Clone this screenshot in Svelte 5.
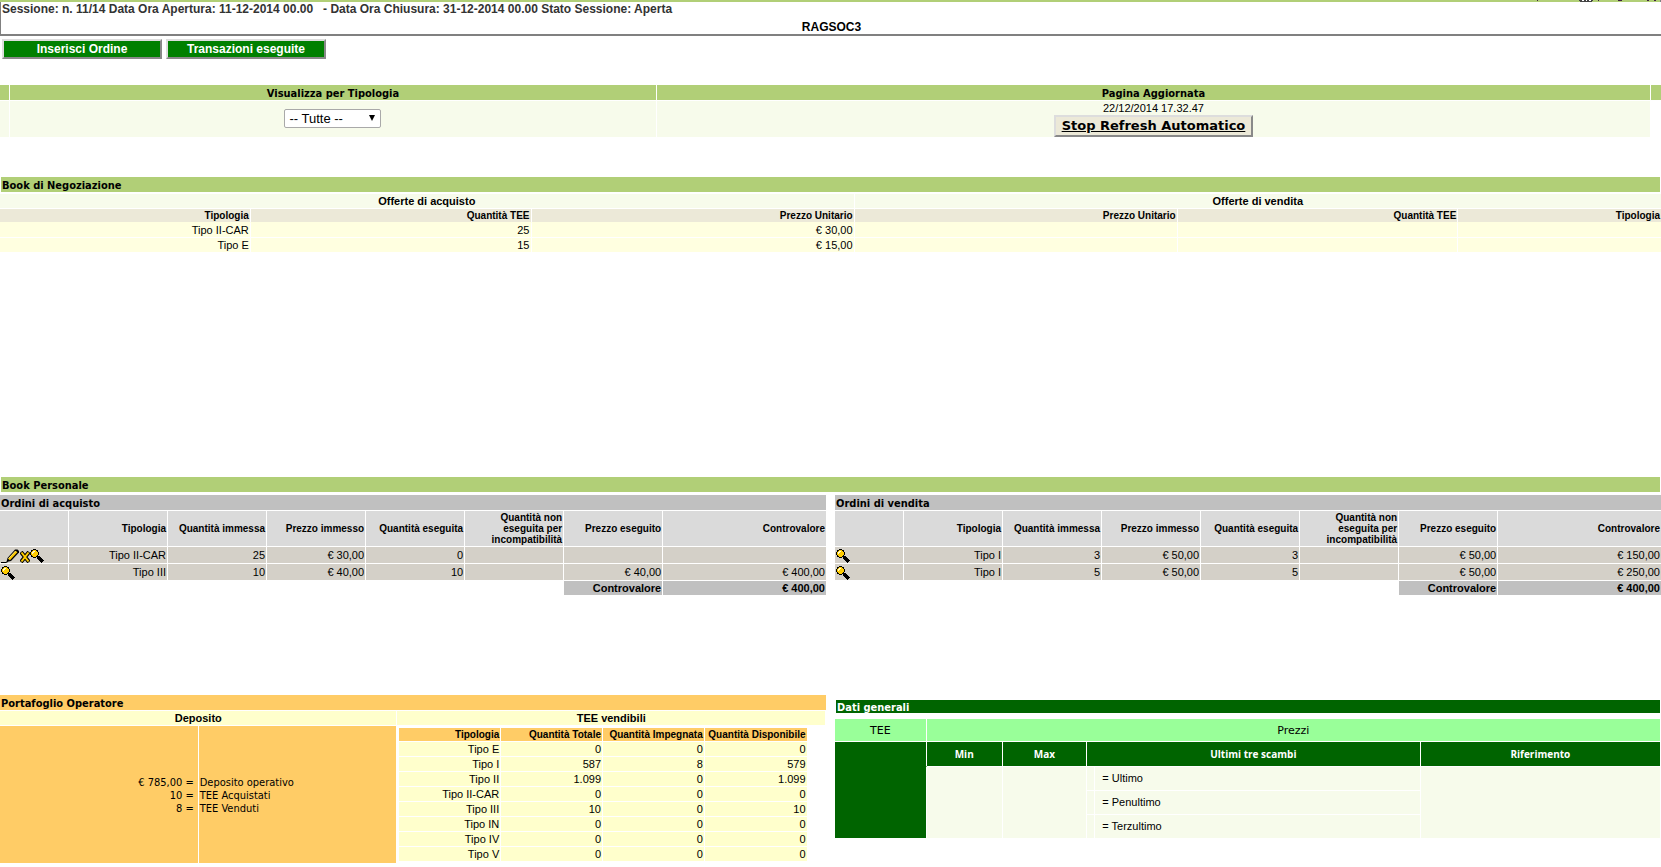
<script lang="ts">
  interface Order {
    editable: boolean;
    cells: string[];
  }

  interface OrderBook {
    id: string;
    title: string;
    orders: Order[];
    total: string;
  }

  let filter = $state('-- Tutte --');
  let autoRefresh = $state(true);

  const offers = [
    ['Tipo II-CAR', '25', '€ 30,00', '', '', ''],
    ['Tipo E', '15', '€ 15,00', '', '', ''],
  ];

  const orderColumns = [
    'Tipologia',
    'Quantità immessa',
    'Prezzo immesso',
    'Quantità eseguita',
    'Quantità non eseguita per incompatibilità',
    'Prezzo eseguito',
    'Controvalore',
  ];

  const books: OrderBook[] = [
    {
      id: 'acquisto',
      title: 'Ordini di acquisto',
      orders: [
        { editable: true, cells: ['Tipo II-CAR', '25', '€ 30,00', '0', '', '', ''] },
        { editable: false, cells: ['Tipo III', '10', '€ 40,00', '10', '', '€ 40,00', '€ 400,00'] },
      ],
      total: '€ 400,00',
    },
    {
      id: 'vendita',
      title: 'Ordini di vendita',
      orders: [
        { editable: false, cells: ['Tipo I', '3', '€ 50,00', '3', '', '€ 50,00', '€ 150,00'] },
        { editable: false, cells: ['Tipo I', '5', '€ 50,00', '5', '', '€ 50,00', '€ 250,00'] },
      ],
      total: '€ 400,00',
    },
  ];

  const holdings = [
    ['Tipo E', '0', '0', '0'],
    ['Tipo I', '587', '8', '579'],
    ['Tipo II', '1.099', '0', '1.099'],
    ['Tipo II-CAR', '0', '0', '0'],
    ['Tipo III', '10', '0', '10'],
    ['Tipo IN', '0', '0', '0'],
    ['Tipo IV', '0', '0', '0'],
    ['Tipo V', '0', '0', '0'],
  ];
</script>

{#snippet editIcon()}
  <svg width="19" height="14" viewBox="0 0 19 14" aria-hidden="true">
    <path d="M0 13.5h5l2-1" fill="none" stroke="#000" />
    <path d="M5.5 13l1-4L14 0.5h2.500l1.500 1.500v1.500L10 12z" fill="#000" />
    <path d="M8 10.500L15.500 2.500" fill="none" stroke="#fc0" stroke-width="2.400" />
    <path d="M7.500 9.500L14.500 2" fill="none" stroke="#fff09a" stroke-width="0.800" />
  </svg>
{/snippet}

{#snippet deleteIcon()}
  <svg width="10" height="12" viewBox="0 0 10 12" aria-hidden="true">
    <path d="M1 1l8 10M9 1L1 11" fill="none" stroke="#000" stroke-width="4" />
    <path d="M1.500 1.500l7 9M8.500 1.500l-7 9" fill="none" stroke="#fc0" stroke-width="2" />
  </svg>
{/snippet}

{#snippet viewIcon()}
  <svg width="14" height="14" viewBox="0 0 14 14" shape-rendering="crispEdges" aria-hidden="true">
    <path d="M3 0h3v1h2v2h1v3H8v2H6v1H3V8H1V6H0V3h1V1h2z" fill="#000" />
    <path d="M3 1h3v1h1v1h1v3H7v1H6v1H3V7H2V6H1V3h1V2h1z" fill="#fc0" />
    <path d="M3 2h2v1H4v1H3v1H2V3h1z" fill="#fffbd0" />
    <path d="M8 7h2v1h1v1h1v1h1v1h1v1h-1v1h-1v1h-1v-1h-1v-1H9v-1H8v-1H7V8h1z" fill="#000" />
  </svg>
{/snippet}

<header>
  <div class="strip">
    <svg width="125" height="2" viewBox="0 0 125 2" shape-rendering="crispEdges" aria-hidden="true">
      <path d="M43 0h14v1h-1v1H44V1h-1z" fill="#444" />
      <path d="M46 0h2v1h-2zM50 0h1v1h-1zM53 0h2v1h-2z" fill="#fff" />
      <path d="M1 0h1v1H1zM62 0h1v1h-1zM82 0h4v1h-4zM111 0h2v1h-2zM118 0h2v1h-2z" fill="#402040" />
      <path d="M124 0h1v2h-1z" fill="#808080" />
    </svg>
  </div>
  <div class="session">
    <p>Sessione: n. 11/14 Data Ora Apertura: 11-12-2014 00.00 &nbsp; - Data Ora Chiusura: 31-12-2014 00.00 Stato Sessione: Aperta</p>
    <p class="company">RAGSOC3</p>
  </div>
</header>

<nav class="actions">
  <button type="button">Inserisci Ordine</button>
  <button type="button">Transazioni eseguite</button>
</nav>

<table class="filters">
  <colgroup>
    <col class="edge" />
    <col class="filter-col" />
    <col />
    <col class="edge" />
  </colgroup>
  <thead>
    <tr>
      <th></th>
      <th><label for="tipologia">Visualizza per Tipologia</label></th>
      <th>Pagina Aggiornata</th>
      <th></th>
    </tr>
  </thead>
  <tbody>
    <tr>
      <td></td>
      <td>
        <span class="select">
          <select id="tipologia" bind:value={filter}>
            <option>-- Tutte --</option>
            {#each holdings as [type] (type)}
              <option>{type}</option>
            {/each}
          </select>
        </span>
      </td>
      <td>
        <div class="updated">22/12/2014 17.32.47</div>
        <button type="button" class="refresh" onclick={() => (autoRefresh = !autoRefresh)}>
          {autoRefresh ? 'Stop' : 'Start'} Refresh Automatico
        </button>
      </td>
      <td class="blank"></td>
    </tr>
  </tbody>
</table>

<section class="market">
  <h2>Book di Negoziazione</h2>
  <table class="offers">
    <colgroup>
      <col class="o1" /><col class="o2" /><col class="o3" />
      <col class="o3" /><col class="o2" /><col />
    </colgroup>
    <thead>
      <tr class="sides">
        <th colspan="3">Offerte di acquisto</th>
        <th colspan="3">Offerte di vendita</th>
      </tr>
      <tr class="names">
        <th>Tipologia</th>
        <th>Quantità TEE</th>
        <th>Prezzo Unitario</th>
        <th>Prezzo Unitario</th>
        <th>Quantità TEE</th>
        <th>Tipologia</th>
      </tr>
    </thead>
    <tbody>
      {#each offers as offer}
        <tr>
          {#each offer as value}
            <td>{value}</td>
          {/each}
        </tr>
      {/each}
    </tbody>
  </table>
</section>

<section class="personal">
  <h2>Book Personale</h2>
  <div class="halves">
    {#each books as book (book.id)}
      <div>
        <h3 class="gray">{book.title}</h3>
        <table class="orders">
          <colgroup>
            <col class="tools" />
            {#each orderColumns.slice(1) as _}
              <col class="narrow" />
            {/each}
            <col />
          </colgroup>
          <thead>
            <tr>
              <th></th>
              {#each orderColumns as column}
                <th>{column}</th>
              {/each}
            </tr>
          </thead>
          <tbody>
            {#each book.orders as order}
              <tr>
                <td>
                  <div class="icons">
                    {#if order.editable}
                      <button type="button" aria-label="Modifica">{@render editIcon()}</button>
                      <button type="button" aria-label="Elimina">{@render deleteIcon()}</button>
                    {/if}
                    <button type="button" aria-label="Dettaglio">{@render viewIcon()}</button>
                  </div>
                </td>
                {#each order.cells as value}
                  <td>{value}</td>
                {/each}
              </tr>
            {/each}
          </tbody>
          <tfoot>
            <tr>
              <td colspan="6" class="blank"></td>
              <th scope="row">Controvalore</th>
              <th>{book.total}</th>
            </tr>
          </tfoot>
        </table>
      </div>
    {/each}
  </div>
</section>

<div class="halves">
  <section class="portfolio">
    <h3 class="orange">Portafoglio Operatore</h3>
    <div class="split">
      <div class="deposit">
        <h4>Deposito</h4>
        <div class="amounts">
          <div class="figures">
            <span>€ 785,00 =</span>
            <span>10 =</span>
            <span>8 =</span>
          </div>
          <div>
            <span>Deposito operativo</span>
            <span>TEE Acquistati</span>
            <span>TEE Venduti</span>
          </div>
        </div>
      </div>
      <div class="sellable">
        <h4>TEE vendibili</h4>
        <table class="holdings">
          <thead>
            <tr>
              <th>Tipologia</th>
              <th>Quantità Totale</th>
              <th>Quantità Impegnata</th>
              <th>Quantità Disponibile</th>
            </tr>
          </thead>
          <tbody>
            {#each holdings as row (row[0])}
              <tr>
                {#each row as value}
                  <td>{value}</td>
                {/each}
              </tr>
            {/each}
          </tbody>
        </table>
      </div>
    </div>
  </section>

  <section class="general">
    <h3 class="green">Dati generali</h3>
    <table class="prices">
      <colgroup>
        <col class="p-tee" /><col class="p-min" /><col class="p-max" />
        <col class="p-mark" /><col class="p-last" /><col />
      </colgroup>
      <thead>
        <tr class="groups">
          <th>TEE</th>
          <th colspan="5">Prezzi</th>
        </tr>
        <tr>
          <th></th>
          <th>Min</th>
          <th>Max</th>
          <th colspan="2">Ultimi tre scambi</th>
          <th>Riferimento</th>
        </tr>
      </thead>
      <tbody>
        <tr>
          <td rowspan="3" class="tee"></td>
          <td rowspan="3"></td>
          <td rowspan="3"></td>
          <td></td>
          <td class="trade">= Ultimo</td>
          <td rowspan="3"></td>
        </tr>
        <tr>
          <td></td>
          <td class="trade">= Penultimo</td>
        </tr>
        <tr>
          <td></td>
          <td class="trade">= Terzultimo</td>
        </tr>
      </tbody>
    </table>
  </section>
</div>

<style>
  :global(body) {
    margin: 0;
    background: #fff;
    color: #000;
    font-family: Arial, 'Liberation Sans', sans-serif;
    font-size: 11px;
  }

  p,
  h2,
  h3,
  h4 {
    margin: 0;
  }

  /* header */
  .strip {
    display: flex;
    justify-content: flex-end;
    height: 2px;
    background: #b1cf77;
  }

  .session {
    padding-left: 1px;
    border-left: 1px solid #808080;
    border-bottom: 2px solid #808080;
    color: #333;
    font-size: 12px;
    font-weight: bold;
    line-height: 14px;
  }

  .company {
    padding: 4px 0 0;
    color: #000;
    text-align: center;
  }

  .actions {
    display: flex;
    gap: 4px;
    padding: 3px 2px 26px;
  }

  .actions button {
    width: 160px;
    height: 20px;
    padding: 0;
    border: 2px outset #ddd;
    background: #008000;
    color: #fff;
    font: bold 12px Arial, 'Liberation Sans', sans-serif;
  }

  /* tables */
  table {
    width: 100%;
    border-spacing: 0;
    table-layout: fixed;
  }

  th,
  td {
    padding: 0 1px;
    border-right: 1px solid #fff;
    border-bottom: 1px solid #fff;
    text-align: right;
  }

  tr > :last-child {
    border-right: 0;
  }

  h2,
  h3,
  .filters th {
    box-sizing: border-box;
    height: 15px;
    padding-top: 2px;
    font-family: Tahoma, 'DejaVu Sans Condensed', sans-serif;
    font-size: 11px;
    font-weight: bold;
    line-height: 13px;
  }

  h2 {
    margin: 0 1px;
    padding-left: 1px;
    background: #b1cf77;
  }

  h3 {
    padding-left: 1px;
  }

  .filters th {
    height: 16px;
    padding: 2px 0 0;
    background: #b1cf77;
    text-align: center;
  }

  .filters td {
    height: 36px;
    padding: 0;
    background: #f7fbeb;
    text-align: center;
  }

  .filters td.blank {
    background: none;
  }

  .edge {
    width: 10px;
  }

  .filter-col {
    width: 38.95%;
  }

  .select {
    display: inline-block;
    position: relative;
    padding-bottom: 2px;
    vertical-align: middle;
  }

  .select::after {
    content: '';
    position: absolute;
    top: 6px;
    right: 6px;
    border: 3px solid transparent;
    border-top: 6px solid #000;
    border-bottom: 0;
    pointer-events: none;
  }

  select {
    appearance: none;
    display: block;
    width: 97px;
    height: 19px;
    padding: 0 4px;
    border: 1px solid #a9a9a9;
    border-radius: 2px;
    background: #fff;
    color: #000;
    font: 13px Arial, 'Liberation Sans', sans-serif;
  }

  .updated {
    line-height: 13px;
  }

  .refresh {
    display: block;
    height: 22px;
    margin: 0 auto;
    padding: 0 6px;
    border: 2px outset #ddd;
    background: #ece9d8;
    color: #000;
    font: bold 13px Verdana, 'DejaVu Sans', sans-serif;
    line-height: 16px;
    text-decoration: underline;
  }

  /* market book */
  .market {
    box-sizing: border-box;
    min-height: 339px;
    padding-top: 39px;
  }

  .offers {
    margin-top: 2px;
  }

  .o1 {
    width: 15.1%;
  }

  .o2 {
    width: 16.9%;
  }

  .o3 {
    width: 19.45%;
  }

  .offers th,
  .offers td {
    height: 14px;
    background: #ffffe0;
    line-height: 14px;
  }

  .offers .sides th {
    background: #f7fbeb;
    text-align: center;
  }

  .offers .names th {
    height: 13px;
    border-bottom-color: #ffffe0;
    background: #ece9d8;
    font-size: 10px;
    line-height: 13px;
  }

  /* personal book */
  .personal {
    min-height: 218px;
  }

  .halves {
    display: grid;
    grid-template-columns: 1fr 1fr;
    gap: 9px;
  }

  .personal .halves {
    margin-top: 3px;
  }

  .gray,
  .orange {
    height: 16px;
    border-bottom: 1px solid #fff;
  }

  .gray {
    background: #c0c0c0;
  }

  .tools {
    width: 69px;
  }

  .narrow {
    width: 11.99%;
  }

  .orders th {
    height: 35px;
    background: #dadada;
    font-size: 10px;
    line-height: 11px;
  }

  .orders td {
    height: 16px;
    background: #d4d0c8;
    line-height: 16px;
  }

  .orders tfoot th,
  .orders tfoot td {
    height: 14px;
    background: #c0c0c0;
    font-size: 11px;
    line-height: 14px;
  }

  .orders tfoot td.blank {
    background: none;
  }

  .icons {
    display: flex;
    align-items: flex-end;
    height: 15px;
  }

  .icons button {
    padding: 0;
    border: 0;
    background: none;
    cursor: pointer;
  }

  .icons svg {
    display: block;
  }

  /* portfolio */
  .orange {
    background: #fc6;
  }

  h4 {
    height: 14px;
    border-bottom: 1px solid #fff;
    background: #ffc;
    font-size: 11px;
    line-height: 14px;
    text-align: center;
  }

  .split {
    display: grid;
    grid-template-columns: 48% 1fr;
    column-gap: 1px;
  }

  .deposit {
    display: flex;
    flex-direction: column;
  }

  .amounts {
    display: grid;
    flex: 1;
    grid-template-columns: 1fr 1fr;
    column-gap: 1px;
    font-family: Tahoma, 'DejaVu Sans Condensed', sans-serif;
    line-height: 13px;
  }

  .amounts div {
    display: flex;
    flex-direction: column;
    justify-content: center;
    padding: 1px 1px 0;
    background: #fc6;
  }

  .amounts .figures {
    align-items: flex-end;
    padding-right: 4px;
  }

  .sellable h4 {
    margin-right: 1px;
  }

  .holdings {
    width: 95%;
    margin: 2px 0 1px 2px;
  }

  .holdings th {
    height: 13px;
    padding: 0 1px;
    background: #fc6;
    font-size: 10px;
    line-height: 13px;
    white-space: nowrap;
  }

  .holdings td {
    height: 14px;
    background: #ffc;
    line-height: 14px;
  }

  /* general data */
  .general {
    padding-top: 5px;
  }

  .green {
    height: 13px;
    margin: 0 1px 6px;
    background: #006400;
    color: #fff;
    line-height: 11px;
  }

  .prices {
    width: calc(100% - 1px);
  }

  .prices th {
    height: 24px;
    background: #006400;
    color: #fff;
    font-family: Tahoma, 'Open Sans', sans-serif;
    font-size: 10px;
    font-weight: bold;
    text-align: center;
  }

  .prices .groups th {
    height: 22px;
    background: #9f9;
    color: #000;
    font-family: Verdana, 'DejaVu Sans', sans-serif;
    font-size: 11px;
    font-weight: normal;
  }

  .prices td {
    height: 21px;
    padding-bottom: 2px;
    background: #f7fbeb;
    text-align: left;
  }

  .prices tr:nth-child(2) > th:first-child {
    border-bottom-color: #006400;
  }

  .prices td.tee {
    background: #006400;
  }

  .prices td.trade {
    padding-left: 7px;
    border-right: 1px solid #fff;
  }

  .p-tee {
    width: 11.1%;
  }

  .p-min {
    width: 9.25%;
  }

  .p-max {
    width: 10.2%;
  }

  .p-mark {
    width: 1%;
  }

  .p-last {
    width: 39.45%;
  }
</style>
